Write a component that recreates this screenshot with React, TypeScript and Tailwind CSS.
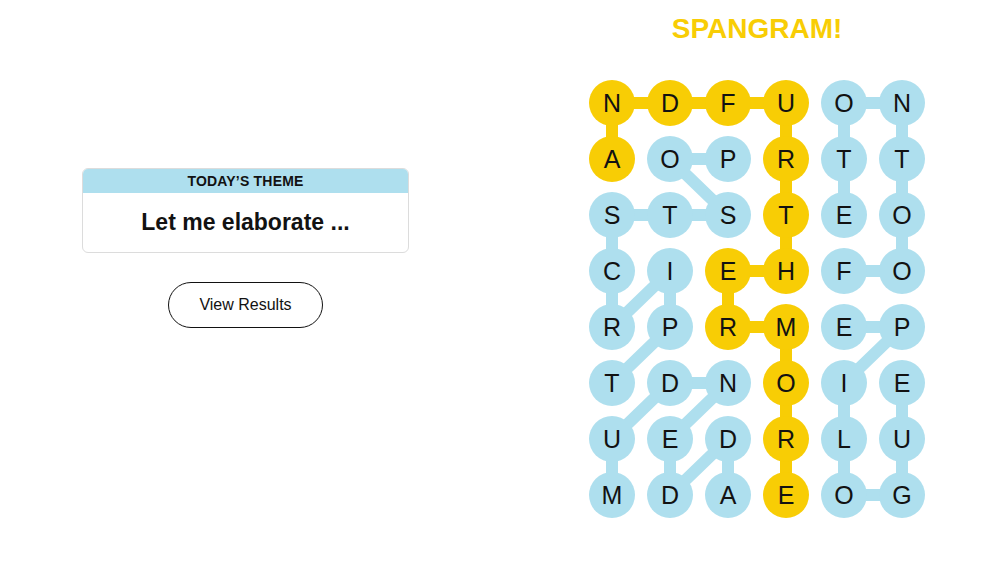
import React from 'react';

const GRID = ['NDFUON', 'AOPRTT', 'STSTEO', 'CIEHFO', 'RPRMEP', 'TDNOIE', 'UEDRLU', 'MDAEOG'];

const BLUE = '#aedfee';
const YELLOW = '#f8cd05';

// found words, each as a chain of [row, col]
const WORDS: { cells: number[][]; spangram?: boolean }[] = [
  { cells: [[1, 0], [0, 0], [0, 1], [0, 2], [0, 3], [1, 3], [2, 3], [3, 3], [3, 2], [4, 2], [4, 3], [5, 3], [6, 3], [7, 3]], spangram: true },
  { cells: [[1, 2], [1, 1], [2, 2], [2, 1], [2, 0], [3, 0], [4, 0], [3, 1], [4, 1], [5, 0]] },
  { cells: [[7, 2], [6, 2], [7, 1], [6, 1], [5, 2], [5, 1], [6, 0], [7, 0]] },
  { cells: [[3, 4], [3, 5], [2, 5], [1, 5], [0, 5], [0, 4], [1, 4], [2, 4]] },
  { cells: [[4, 4], [4, 5], [5, 4], [6, 4], [7, 4], [7, 5], [6, 5], [5, 5]] },
];

const cx = (c: number) => 23 + c * 58;
const cy = (r: number) => 23 + r * 56;

const Board: React.FC = () => {
  const colorOf: Record<string, string> = {};
  WORDS.forEach((w) => w.cells.forEach(([r, c]) => (colorOf[`${r}-${c}`] = w.spangram ? YELLOW : BLUE)));

  return (
    <svg width={336} height={438} viewBox="0 0 336 438">
      {WORDS.map((w, i) => (
        <polyline
          key={i}
          points={w.cells.map(([r, c]) => `${cx(c)},${cy(r)}`).join(' ')}
          fill="none"
          stroke={w.spangram ? YELLOW : BLUE}
          strokeWidth={12}
          strokeLinejoin="round"
        />
      ))}
      {GRID.map((row, r) =>
        row.split('').map((ch, c) => (
          <g key={`${r}-${c}`}>
            <circle cx={cx(c)} cy={cy(r)} r={23} fill={colorOf[`${r}-${c}`]} />
            <text
              x={cx(c)}
              y={cy(r) + 9}
              textAnchor="middle"
              fontSize={25}
              fill="#121212"
              fontFamily="'Liberation Sans', Arial, sans-serif"
            >
              {ch}
            </text>
          </g>
        ))
      )}
    </svg>
  );
};

export default function App() {
  return (
    <div className="flex w-[1005px] h-[573px] bg-white text-[#121212] font-['Liberation_Sans',Arial,sans-serif]">
      <div className="w-[491px] flex flex-col items-center pt-[168px]">
        <div className="w-[327px] rounded-md border border-[#dcdcdc] overflow-hidden">
          <div className="h-[24px] bg-[#aedfee] flex items-center justify-center text-[14px] font-semibold tracking-[0.2px]">
            TODAY’S THEME
          </div>
          <div className="h-[59px] flex items-center justify-center text-[23px] font-bold">
            Let me elaborate ...
          </div>
        </div>
        <button className="mt-[29px] w-[155px] h-[46px] rounded-full border border-[#121212] text-[16px] bg-white">
          View Results
        </button>
      </div>
      <div className="pl-[98px] flex flex-col items-center w-[434px]">
        <div className="w-[336px] pt-[13px] text-center text-[28px] leading-[32px] font-bold text-[#f8cd05]">
          SPANGRAM!
        </div>
        <div className="mt-[35px]">
          <Board />
        </div>
      </div>
    </div>
  );
}
